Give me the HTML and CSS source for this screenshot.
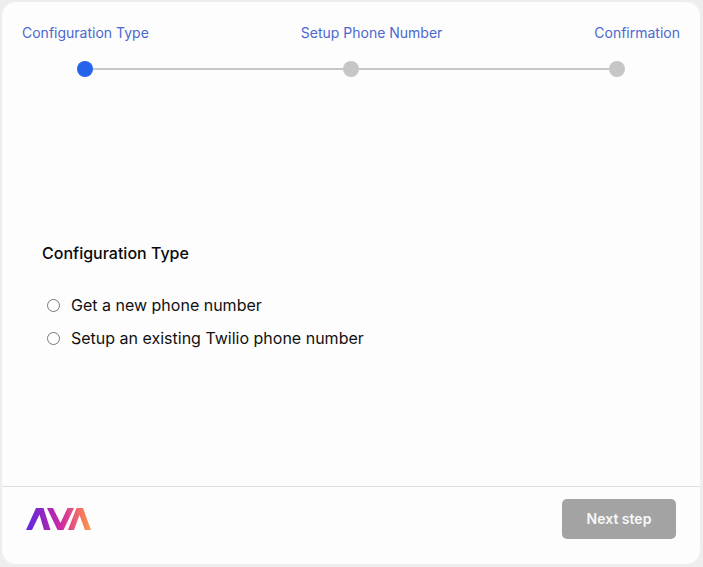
FILE: index.html
```html
<!DOCTYPE html>
<html lang="en">
<head>
<meta charset="utf-8">
<title>Configuration Type</title>
<link rel="stylesheet" href="styles.css">
</head>
<body>
<main class="card">
  <section class="stepper">
    <div class="labels">
      <span>Configuration Type</span>
      <span>Setup Phone Number</span>
      <span>Confirmation</span>
    </div>
    <div class="track">
      <span class="dot active"></span>
      <span class="line"></span>
      <span class="dot"></span>
      <span class="line"></span>
      <span class="dot"></span>
    </div>
  </section>
  <section class="content">
    <h1 class="title">Configuration Type</h1>
    <label class="option"><input type="radio" name="config" class="radio"><span>Get a new phone number</span></label>
    <label class="option"><input type="radio" name="config" class="radio"><span>Setup an existing Twilio phone number</span></label>
  </section>
  <footer class="footer">
    <svg class="logo" width="66" height="24" viewBox="0 0 66 24" aria-label="AVA">
      <defs>
        <linearGradient id="ava" x1="0" y1="0" x2="65" y2="0" gradientUnits="userSpaceOnUse">
          <stop offset="0" stop-color="#5a2be0"/>
          <stop offset="0.22" stop-color="#8a26c4"/>
          <stop offset="0.55" stop-color="#d02aa0"/>
          <stop offset="0.8" stop-color="#ee6a6a"/>
          <stop offset="1" stop-color="#fb9a4a"/>
        </linearGradient>
      </defs>
      <path fill="url(#ava)" d="M0 23 L10 1 H17.5 L24.5 23 H18 L13.5 7.5 L6 23 Z"/>
      <path fill="url(#ava)" d="M21 1 H27 L34.5 16 L41.5 1 H48 L37.5 23 H31.5 Z"/>
      <path fill="url(#ava)" d="M42 23 L50.5 1 H57 L65 23 H59 L53.5 8 L48 23 Z"/>
    </svg>
    <button class="next" type="button">Next step</button>
  </footer>
</main>
</body>
</html>
```
FILE: styles.css
```css
* { box-sizing: border-box; }
html, body { height: 100%; }
body {
  margin: 0;
  padding: 2px 3px 3px 2px;
  background: #eeeeef;
  font-family: Inter, "Liberation Sans", sans-serif;
}
.card {
  height: 562px;
  background: #fdfdfe;
  border-radius: 14px;
  display: flex;
  flex-direction: column;
}
.stepper { padding: 22px 20px 0; height: 128px; }
.labels {
  display: flex;
  justify-content: space-between;
  font-size: 14px;
  line-height: 18px;
  color: #4a68cf;
}
.track {
  display: flex;
  align-items: center;
  margin: 19px 55px 0;
}
.dot { width: 16px; height: 16px; border-radius: 50%; background: #c6c6c6; flex: none; }
.dot.active { background: #2563eb; }
.line { flex: 1; height: 2px; background: #c6c6c6; }
.content { flex: 1; padding: 113px 40px 0; }
.title {
  margin: 0 0 25px;
  font-size: 16px;
  line-height: 20px;
  font-weight: 450;
  color: #0a0a0a;
}
.option {
  display: flex;
  align-items: center;
  height: 33px;
  padding-left: 5px;
  font-size: 16px;
  color: #111;
}
.radio {
  width: 13px;
  height: 13px;
  margin: 1px 11px 0 0;
  flex: none;
}
.footer {
  height: 78px;
  border-top: 1px solid #dedee0;
  display: flex;
  align-items: center;
  justify-content: space-between;
  padding: 0 24px 0 24px;
}
.logo { margin-top: -14px; }
.next {
  width: 114px;
  height: 40px;
  margin-top: -13px;
  padding: 0 0 2px;
  border: 0;
  border-radius: 5px;
  background: #a3a3a3;
  color: #f7f7f7;
  font: 600 14px Inter, "Liberation Sans", sans-serif;
}
```
